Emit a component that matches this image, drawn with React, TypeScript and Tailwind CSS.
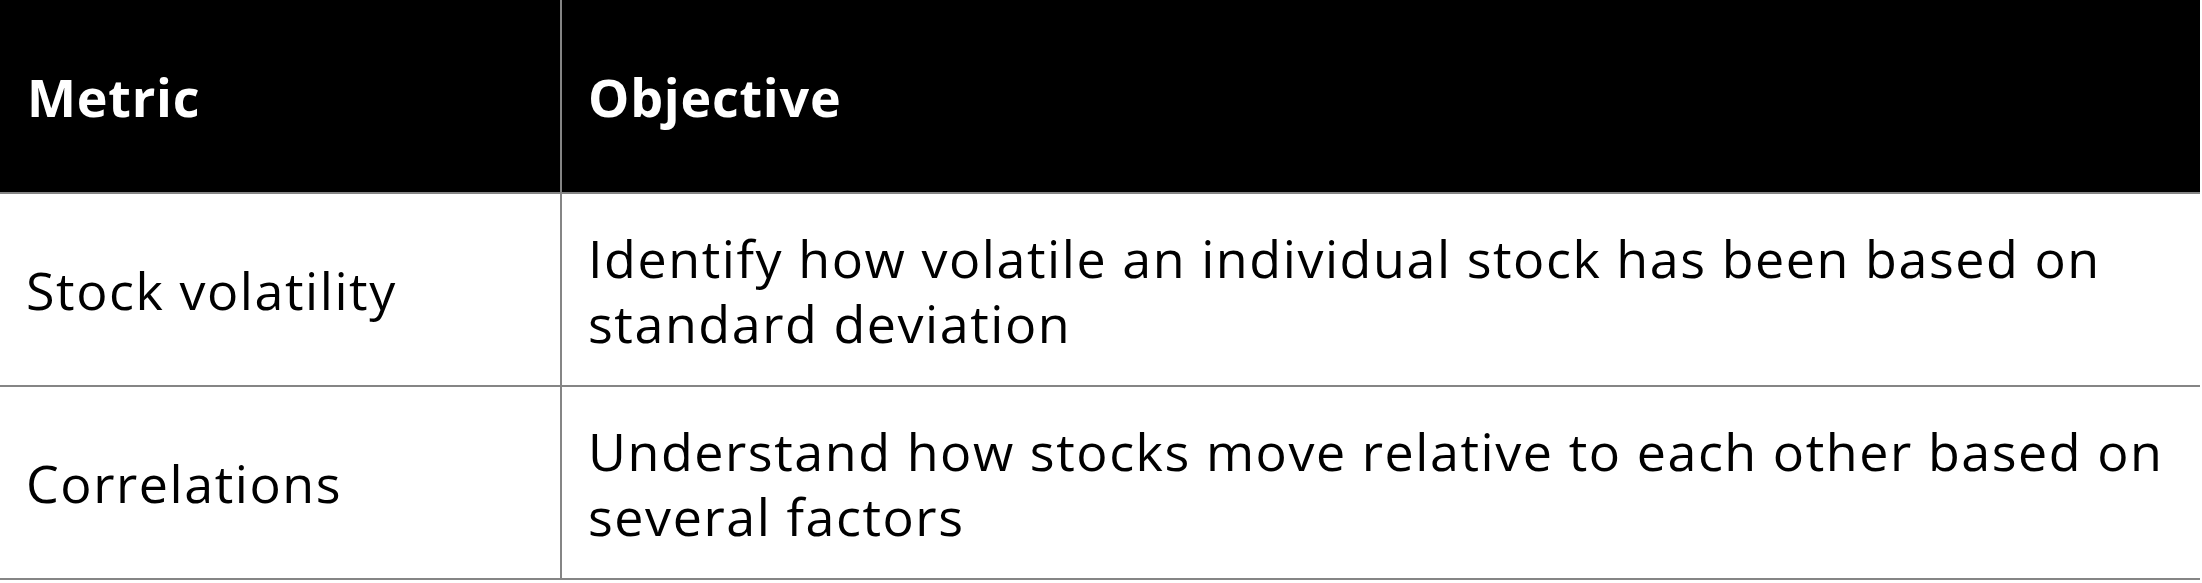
const rows = [
  {
    metric: "Stock volatility",
    objective:
      "Identify how volatile an individual stock has been based on standard deviation",
  },
  {
    metric: "Correlations",
    objective:
      "Understand how stocks move relative to each other based on several factors",
  },
];

export default function App() {
  return (
    <div className="w-[2200px] bg-white font-['Open_Sans',sans-serif] text-[52px] leading-[65px] tracking-[0.03em] text-black">
      <div className="grid grid-cols-[562px_1fr] bg-black text-white font-bold tracking-[0.015em] border-b-2 border-[#858585]">
        <div className="h-[192px] flex items-center pl-[27px] border-r-2 border-[#858585]">
          Metric
        </div>
        <div className="flex items-center pl-[26px]">Objective</div>
      </div>
      {rows.map((row) => (
        <div
          key={row.metric}
          className="grid grid-cols-[562px_1fr] border-b-2 border-[#858585]"
        >
          <div className="h-[191px] flex items-center pl-[26px] border-r-2 border-[#858585]">
            {row.metric}
          </div>
          <div className="flex items-center pl-[26px] pr-[30px]">
            {row.objective}
          </div>
        </div>
      ))}
    </div>
  );
}
